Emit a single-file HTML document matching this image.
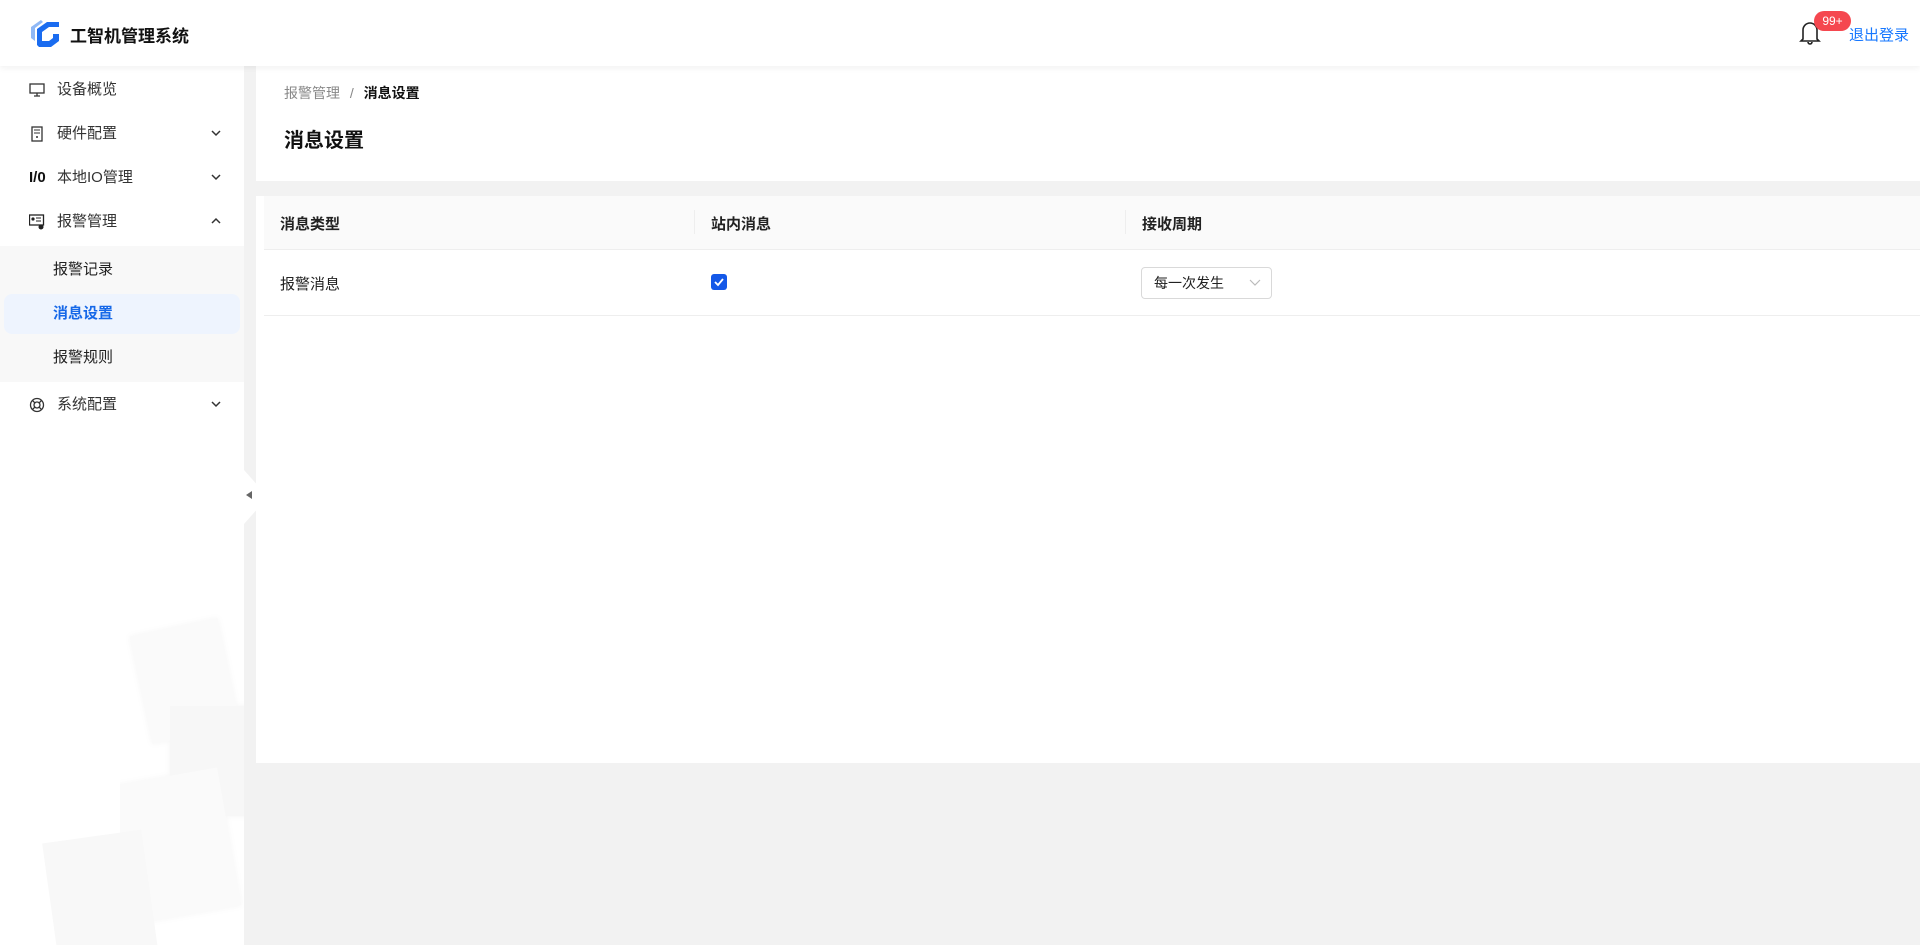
<!DOCTYPE html>
<html><head><meta charset="utf-8"><style>
*{margin:0;padding:0;box-sizing:border-box}
body{width:1920px;height:945px;overflow:hidden;background:#f2f2f2;font-family:"Liberation Sans","Noto Sans CJK SC",sans-serif;position:relative;color:#222}
.hdr{position:absolute;left:0;top:0;width:1920px;height:66px;background:#fff;box-shadow:0 2px 6px rgba(0,0,0,.06);z-index:3}
.title{position:absolute;left:70px;top:22px;font-size:17px;font-weight:bold;color:#111}
.side{position:absolute;left:0;top:66px;width:244px;height:879px;background:#fff;overflow:hidden}
.mi{position:absolute;left:0;width:244px;height:40px;font-size:15px;color:#333;line-height:40px}
.mi .ic{position:absolute;left:29px;top:12px;width:16px;height:16px}
.mi .t{position:absolute;left:57px}
.mi .ch{position:absolute;left:210px;top:13px}
.sub{position:absolute;left:0;top:180px;width:244px;height:136px;background:#f8f8f8}
.si{position:absolute;left:53px;font-size:15px;color:#222;line-height:40px}
.act{position:absolute;left:4px;top:48px;width:236px;height:40px;background:#eef4fe;border-radius:8px}
.p1{position:absolute;left:256px;top:66px;width:1664px;height:115px;background:#fff}
.p2{position:absolute;left:256px;top:196px;width:1664px;height:567px;background:#fff}
.cell{position:absolute;font-size:15px}
</style></head><body>
<div class="hdr">
<svg style="position:absolute;left:29px;top:17px" width="32" height="32" viewBox="0 0 32 32">
<path d="M2 10 L12 3 L14 5 L6 11 L6 24 L2 21Z" fill="#8fb8f5"/>
<path d="M8 12 L18 5 L30 5 L30 10 L20 10 L13 15 L13 24 L20 24 L24 21 L24 17 L30 17 L30 24 L22 30 L10 30 L8 28Z" fill="#1a6cf0"/>
</svg>
<div class="title">工智机管理系统</div>
<svg style="position:absolute;left:1799px;top:20px" width="22" height="26" viewBox="0 0 22 26"><path d="M4 19 L4 10 A7 7 0 0 1 18 10 L18 19 L20 21 L2 21 Z" fill="none" stroke="#222" stroke-width="1.6"/><path d="M9 22 A2 2 0 0 0 13 22" fill="none" stroke="#222" stroke-width="1.6"/></svg>
<div style="position:absolute;left:1814px;top:11px;width:37px;height:20px;background:#f5474f;border-radius:10px;color:#fff;font-size:12px;text-align:center;line-height:20px">99+</div>
<div style="position:absolute;left:1849px;top:24px;font-size:15px;color:#1677ff">退出登录</div>
</div>

<div class="side">
<svg style="position:absolute;left:120px;top:540px" width="130" height="340"><g fill="#fafafa" style="filter:drop-shadow(0 0 3px rgba(0,0,0,.04))"><rect x="20" y="20" width="90" height="110" transform="rotate(-12 65 75)"/><rect x="50" y="100" width="80" height="110" fill="#f7f7f7"/><rect x="0" y="170" width="110" height="140" transform="rotate(-10 55 240)"/></g></svg>
<svg style="position:absolute;left:40px;top:750px" width="120" height="140"><rect x="10" y="20" width="100" height="120" fill="#f8f8f8" transform="rotate(-8 60 80)"/></svg>
<div class="mi" style="top:4px"><svg class="ic" viewBox="0 0 16 16"><rect x="1" y="2" width="14" height="9" fill="none" stroke="#333" stroke-width="1.3"/><path d="M8 11v3M5 14h6" stroke="#333" stroke-width="1.3"/></svg><span class="t">设备概览</span></div>
<div class="mi" style="top:48px"><svg class="ic" viewBox="0 0 16 16"><rect x="3" y="1" width="10" height="14" fill="none" stroke="#333" stroke-width="1.3"/><path d="M5 4h6M5 7h6" stroke="#333"/><circle cx="8" cy="11" r="1" fill="#333"/></svg><span class="t">硬件配置</span><svg class="ch" width="12" height="12"><path d="M2 4l4 4 4-4" fill="none" stroke="#333" stroke-width="1.5"/></svg></div>
<div class="mi" style="top:92px"><span style="position:absolute;left:29px;font-size:15px;font-weight:bold;color:#111">I/0</span><span class="t">本地IO管理</span><svg class="ch" width="12" height="12"><path d="M2 4l4 4 4-4" fill="none" stroke="#333" stroke-width="1.5"/></svg></div>
<div class="mi" style="top:136px"><svg class="ic" viewBox="0 0 16 16"><rect x="0.5" y="1" width="14" height="10" fill="none" stroke="#222" stroke-width="1.3"/><circle cx="4" cy="5" r="1.6" fill="#222"/><path d="M7 4h5M7 7h5" stroke="#222"/><circle cx="12" cy="13" r="2.5" fill="#222"/></svg><span class="t">报警管理</span><svg class="ch" width="12" height="12"><path d="M2 8l4-4 4 4" fill="none" stroke="#333" stroke-width="1.5"/></svg></div>
<div class="sub">
<div class="si" style="top:4px">报警记录</div>
<div class="act"></div>
<div class="si" style="top:48px;color:#1668e8;font-weight:bold">消息设置</div>
<div class="si" style="top:92px">报警规则</div>
</div>
<div class="mi" style="top:319px"><svg class="ic" viewBox="0 0 16 16"><circle cx="8" cy="8" r="6.5" fill="none" stroke="#333" stroke-width="1.3"/><circle cx="8" cy="8" r="3" fill="none" stroke="#333" stroke-width="1.3"/><path d="M3.5 3.5l2.4 2.4M12.5 3.5l-2.4 2.4M3.5 12.5l2.4-2.4M12.5 12.5l-2.4-2.4" stroke="#333" stroke-width="1.3"/></svg><span class="t">系统配置</span><svg class="ch" width="12" height="12"><path d="M2 4l4 4 4-4" fill="none" stroke="#333" stroke-width="1.5"/></svg></div>
</div>
<div style="position:absolute;left:244px;top:470px;width:12px;height:54px;background:#fff;clip-path:polygon(0 0,100% 25%,100% 75%,0 100%)"></div>
<div style="position:absolute;left:246px;top:491px;width:0;height:0;border-top:4px solid transparent;border-bottom:4px solid transparent;border-right:6px solid #666"></div>

<div class="p1">
<div style="position:absolute;left:28px;top:17px;font-size:14px;color:#888">报警管理 <span style="color:#888;margin:0 6px">/</span> <span style="color:#111;font-weight:bold">消息设置</span></div>
<div style="position:absolute;left:28px;top:58px;font-size:20px;font-weight:bold;color:#111">消息设置</div>
</div>
<div class="p2">
<div style="position:absolute;left:8px;top:0;width:1656px;height:54px;background:#fafafa;border-bottom:1px solid #eee"></div>
<div style="position:absolute;left:438px;top:14px;width:1px;height:24px;background:#eee"></div>
<div style="position:absolute;left:869px;top:14px;width:1px;height:24px;background:#eee"></div>
<div class="cell" style="left:24px;top:17px;font-weight:bold">消息类型</div>
<div class="cell" style="left:455px;top:17px;font-weight:bold">站内消息</div>
<div class="cell" style="left:886px;top:17px;font-weight:bold">接收周期</div>
<div style="position:absolute;left:8px;top:119px;width:1656px;height:1px;background:#eee"></div>
<div class="cell" style="left:24px;top:77px">报警消息</div>
<div style="position:absolute;left:455px;top:78px;width:16px;height:16px;background:#1458e8;border-radius:3px"><svg width="16" height="16"><path d="M4 8l3 3 5-6" fill="none" stroke="#fff" stroke-width="1.8"/></svg></div>
<div style="position:absolute;left:885px;top:71px;width:131px;height:32px;border:1px solid #d9d9d9;border-radius:4px;font-size:14px;line-height:30px;padding-left:12px">每一次发生<svg style="position:absolute;right:10px;top:11px" width="12" height="8"><path d="M1 1l5 5 5-5" fill="none" stroke="#bbb" stroke-width="1.2"/></svg></div>
</div>
</body></html>
